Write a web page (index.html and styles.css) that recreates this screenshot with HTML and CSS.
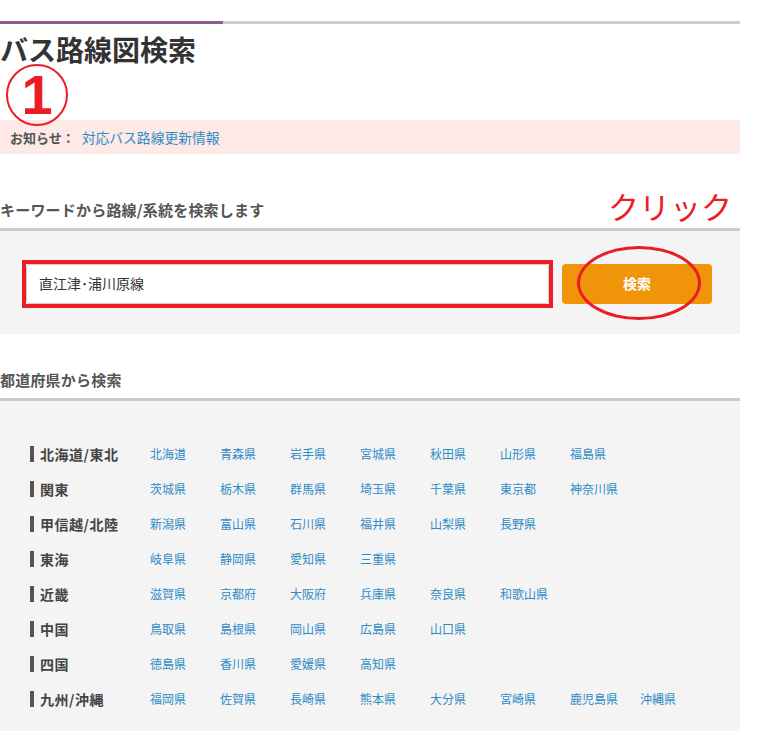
FILE: index.html
```html
<!DOCTYPE html>
<html lang="ja">
<head>
    <meta charset="UTF-8">
    <meta name="viewport" content="width=device-width, initial-scale=1.0">
    <title>バス路線図検索</title>
    <link rel="stylesheet" href="styles.css">
</head>
<body>
    <div class="page">
        <div class="top-line"></div>

        <div class="header">
            <h1>バス路線図検索</h1>
            <div class="mark-one">1</div>
        </div>

        <div class="notice">
            <span class="notice-label">お知らせ：</span>
            <a href="#">対応バス路線更新情報</a>
        </div>

        <div class="section-head">
            <h2>キーワードから路線/系統を検索します</h2>
            <span class="click-note">クリック</span>
        </div>
        <form class="search-box">
            <div class="input-mark">
                <input type="text" class="keyword" value="直江津･浦川原線">
            </div>
            <div class="button-wrap">
                <button type="submit">検索</button>
                <div class="button-mark"></div>
            </div>
        </form>

        <div class="section-head pref-head">
            <h2>都道府県から検索</h2>
        </div>
        <div class="pref-box">
            <div class="pref-row">
                <div class="area">北海道/東北</div>
                <a href="#">北海道</a><a href="#">青森県</a><a href="#">岩手県</a><a href="#">宮城県</a><a href="#">秋田県</a><a href="#">山形県</a><a href="#">福島県</a>
            </div>
            <div class="pref-row">
                <div class="area">関東</div>
                <a href="#">茨城県</a><a href="#">栃木県</a><a href="#">群馬県</a><a href="#">埼玉県</a><a href="#">千葉県</a><a href="#">東京都</a><a href="#">神奈川県</a>
            </div>
            <div class="pref-row">
                <div class="area">甲信越/北陸</div>
                <a href="#">新潟県</a><a href="#">富山県</a><a href="#">石川県</a><a href="#">福井県</a><a href="#">山梨県</a><a href="#">長野県</a>
            </div>
            <div class="pref-row">
                <div class="area">東海</div>
                <a href="#">岐阜県</a><a href="#">静岡県</a><a href="#">愛知県</a><a href="#">三重県</a>
            </div>
            <div class="pref-row">
                <div class="area">近畿</div>
                <a href="#">滋賀県</a><a href="#">京都府</a><a href="#">大阪府</a><a href="#">兵庫県</a><a href="#">奈良県</a><a href="#">和歌山県</a>
            </div>
            <div class="pref-row">
                <div class="area">中国</div>
                <a href="#">鳥取県</a><a href="#">島根県</a><a href="#">岡山県</a><a href="#">広島県</a><a href="#">山口県</a>
            </div>
            <div class="pref-row">
                <div class="area">四国</div>
                <a href="#">徳島県</a><a href="#">香川県</a><a href="#">愛媛県</a><a href="#">高知県</a>
            </div>
            <div class="pref-row">
                <div class="area">九州/沖縄</div>
                <a href="#">福岡県</a><a href="#">佐賀県</a><a href="#">長崎県</a><a href="#">熊本県</a><a href="#">大分県</a><a href="#">宮崎県</a><a href="#">鹿児島県</a><a href="#">沖縄県</a>
            </div>
        </div>
    </div>
</body>
</html>
```

FILE: styles.css
```css
body {
    margin: 0;
    padding: 0;
    font-family: "Noto Sans CJK JP", "Noto Sans", sans-serif;
    color: #333;
    background-color: white;
}

.page {
    width: 740px;
}

a {
    color: #2f8bc6;
    text-decoration: none;
}

.top-line {
    margin-top: 21px;
    height: 3px;
    background: linear-gradient(to right, #8d5c90 223px, #cccccc 223px);
}

.header {
    position: relative;
    height: 96px;
}

h1 {
    margin: 0;
    padding-top: 5px;
    font-size: 28px;
    line-height: 40px;
    font-weight: bold;
    color: #333;
}

/* 注釈の丸数字 */
.mark-one {
    position: absolute;
    left: 6px;
    top: 40px;
    width: 58px;
    height: 58px;
    border: 2px solid #ec1c24;
    border-radius: 50%;
    color: #ec1c24;
    font-family: "Liberation Sans", Arial, sans-serif;
    font-size: 56px;
    font-weight: bold;
    line-height: 58px;
    text-align: center;
}

.notice {
    height: 34px;
    line-height: 34px;
    padding: 0 10px;
    background-color: #fde9e5;
    font-size: 13px;
}

.notice-label {
    font-weight: bold;
    color: #555;
    margin-right: 4px;
}

.notice a {
    font-size: 13.8px;
}

.section-head {
    position: relative;
    margin-top: 44px;
    border-bottom: 3px solid #cccccc;
}

h2 {
    margin: 0;
    padding-bottom: 6px;
    font-size: 15px;
    line-height: 24px;
    font-weight: bold;
    color: #555;
    letter-spacing: 0.2px;
}

.click-note {
    position: absolute;
    right: 8px;
    bottom: 2px;
    color: #ec1c24;
    font-size: 31px;
    line-height: 40px;
}

.search-box {
    display: flex;
    align-items: center;
    margin: 0;
    padding: 29px 28px 26px 22px;
    background-color: #f4f4f4;
}

.input-mark {
    width: 523px;
    border: 4px solid #ec1c24;
}

.keyword {
    display: block;
    box-sizing: border-box;
    width: 100%;
    height: 40px;
    margin: 0;
    padding: 0 12px 3px;
    border: 1px solid #cccccc;
    border-radius: 3px;
    background-color: white;
    font-family: "Noto Sans CJK JP", sans-serif;
    font-size: 14px;
    color: #333;
}

.button-wrap {
    position: relative;
    margin-left: 9px;
}

button {
    display: block;
    width: 150px;
    height: 40px;
    padding: 0 0 3px;
    border: none;
    border-radius: 4px;
    background-color: #f0950a;
    color: white;
    font-family: "Noto Sans CJK JP", sans-serif;
    font-size: 14px;
    font-weight: bold;
    cursor: pointer;
}

.button-mark {
    position: absolute;
    left: 15px;
    top: -18px;
    width: 118px;
    height: 68px;
    border: 3px solid #ec1c24;
    border-radius: 50%;
}

.pref-head {
    margin-top: 34px;
}

.pref-box {
    padding: 35px 0 15px 30px;
    background-color: #f4f4f4;
}

.pref-row {
    display: flex;
    align-items: center;
    height: 35px;
}

.area {
    width: 110px;
    padding-left: 6px;
    border-left: 4px solid #555;
    font-size: 14px;
    line-height: 16px;
    font-weight: bold;
    color: #444;
    letter-spacing: 0.5px;
}

.pref-row a {
    width: 70px;
    font-size: 12px;
}
```
